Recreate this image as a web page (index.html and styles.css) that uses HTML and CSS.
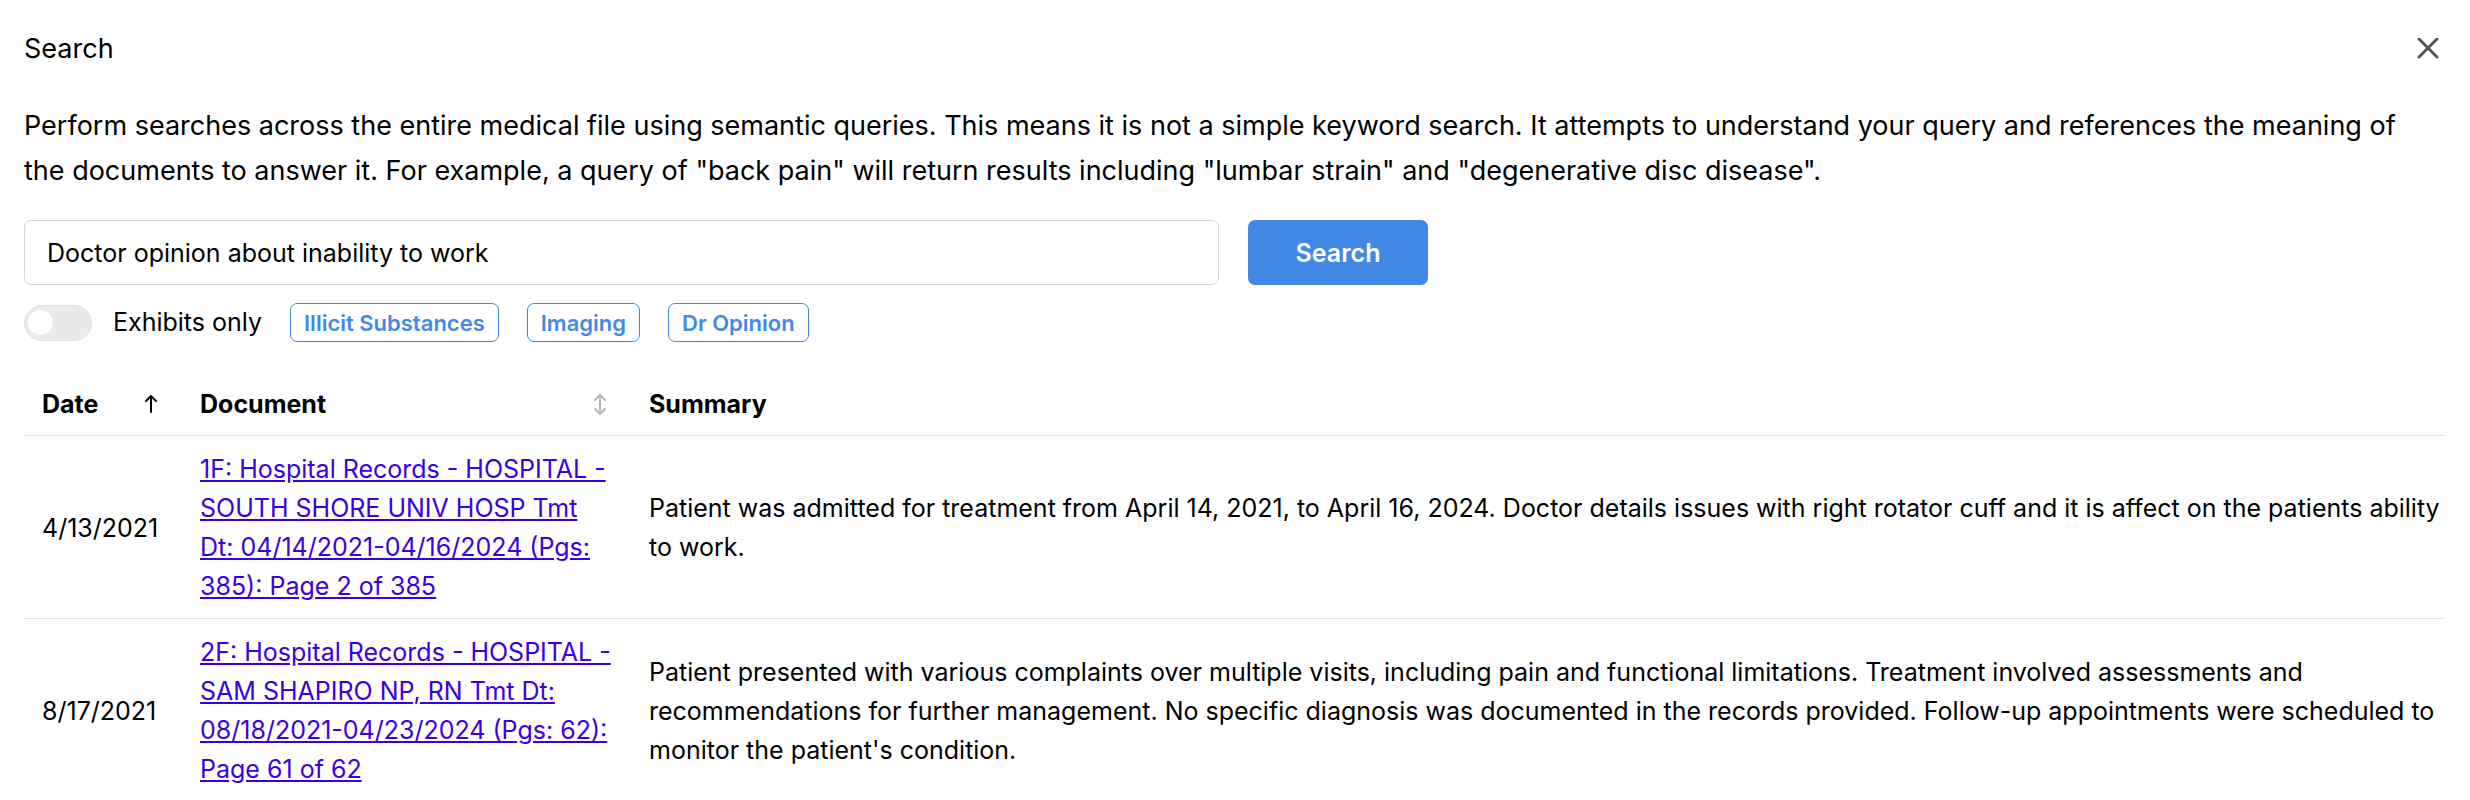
FILE: index.html
```html
<!DOCTYPE html>
<html lang="en">
<head>
    <meta charset="UTF-8">
    <meta name="viewport" content="width=device-width, initial-scale=1.0">
    <title>Search</title>
    <link rel="stylesheet" href="styles.css">
</head>
<body>
    <div class="container">
        <header class="header">
            <h1 class="title">Search</h1>
            <button type="button" class="close-btn" aria-label="Close">
                <svg width="22" height="22" viewBox="0 0 22 22" fill="none" stroke="currentColor" stroke-width="3" stroke-linecap="round">
                    <path d="M2 1 L20 19 M20 1 L2 19"/>
                </svg>
            </button>
        </header>

        <p class="intro">Perform searches across the entire medical file using semantic queries. This means it is not a simple keyword search. It attempts to understand your query and references the meaning of the documents to answer it. For example, a query of "back pain" will return results including "lumbar strain" and "degenerative disc disease".</p>

        <form class="search-form">
            <input type="text" class="search-input" id="query" aria-label="Search query" value="Doctor opinion about inability to work">
            <button type="button" class="search-btn">Search</button>
        </form>

        <div class="filters">
            <div class="switch-group">
                <input type="checkbox" class="switch" id="exhibitsOnly">
                <label for="exhibitsOnly">Exhibits only</label>
            </div>
            <button type="button" class="tag">Illicit Substances</button>
            <button type="button" class="tag">Imaging</button>
            <button type="button" class="tag">Dr Opinion</button>
        </div>

        <table class="results">
            <thead>
                <tr>
                    <th class="col-date">
                        <div class="th-inner">
                            Date
                            <svg class="sort active" width="12" height="22" viewBox="0 0 12 22" fill="none" stroke="currentColor" stroke-width="2" stroke-linecap="round" stroke-linejoin="round">
                                <path d="M6 18 V2 M1 7 L6 2 L11 7"/>
                            </svg>
                        </div>
                    </th>
                    <th class="col-document">
                        <div class="th-inner">
                            Document
                            <svg class="sort" width="12" height="22" viewBox="0 0 12 22" fill="none" stroke="currentColor" stroke-width="2" stroke-linecap="round" stroke-linejoin="round">
                                <path d="M6 1 V20 M1 6 L6 1 L11 6 M1 15 L6 20 L11 15"/>
                            </svg>
                        </div>
                    </th>
                    <th>Summary</th>
                </tr>
            </thead>
            <tbody>
                <tr>
                    <td>4/13/2021</td>
                    <td><a href="#">1F: Hospital Records - HOSPITAL - SOUTH SHORE UNIV HOSP Tmt Dt: 04/14/2021-04/16/2024 (Pgs: 385): Page 2 of 385</a></td>
                    <td>Patient was admitted for treatment from April 14, 2021, to April 16, 2024. Doctor details issues with right rotator cuff and it is affect on the patients ability to work.</td>
                </tr>
                <tr>
                    <td>8/17/2021</td>
                    <td><a href="#">2F: Hospital Records - HOSPITAL - SAM SHAPIRO NP, RN Tmt Dt: 08/18/2021-04/23/2024 (Pgs: 62): Page 61 of 62</a></td>
                    <td>Patient presented with various complaints over multiple visits, including pain and functional limitations. Treatment involved assessments and recommendations for further management. No specific diagnosis was documented in the records provided. Follow-up appointments were scheduled to monitor the patient's condition.</td>
                </tr>
            </tbody>
        </table>
    </div>
</body>
</html>
```
FILE: styles.css
```css
* {
    box-sizing: border-box;
}
body {
    margin: 0;
    background-color: #fff;
    color: #000;
    font-family: Inter, "Liberation Sans", sans-serif;
    font-size: 25px;
    line-height: 39px;
}
button,
input {
    font-family: inherit;
    font-size: 25px;
    margin: 0;
}
.container {
    padding: 26px 26px 0 24px;
}
.header {
    display: flex;
    justify-content: space-between;
    align-items: center;
    padding-right: 5px;
}
.title {
    margin: 0;
    font-size: 27px;
    font-weight: 400;
    line-height: 45px;
}
.close-btn {
    display: flex;
    padding: 0;
    border: none;
    background: none;
    color: #555;
    cursor: pointer;
}
.intro {
    margin: 32px 0 27px;
    padding-right: 6px;
    font-size: 27px;
    line-height: 45px;
}
.search-form {
    display: flex;
    gap: 29px;
}
.search-input {
    width: 1195px;
    height: 65px;
    padding: 0 22px;
    border: 1px solid #ced4da;
    border-radius: 7px;
    color: #000;
}
.search-btn {
    width: 180px;
    height: 65px;
    border: none;
    border-radius: 7px;
    background-color: #4289e6;
    color: #fff;
    font-weight: 600;
    cursor: pointer;
}
.filters {
    display: flex;
    align-items: center;
    gap: 28px;
    margin-top: 18px;
}
.switch-group {
    display: flex;
    align-items: center;
    gap: 21px;
}
.switch {
    appearance: none;
    display: flex;
    align-items: center;
    width: 68px;
    height: 36px;
    padding: 0 3px;
    border: 1px solid #dee2e6;
    border-radius: 18px;
    background-color: #e9eaec;
}
.switch::before {
    content: "";
    width: 25px;
    height: 25px;
    border-radius: 50%;
    background-color: #fff;
}
.switch:checked {
    justify-content: flex-end;
    background-color: #4289e6;
}
.tag {
    height: 39px;
    padding: 0 13px;
    border: 1px solid #4289e6;
    border-radius: 7px;
    background-color: #fff;
    color: #4289e6;
    font-size: 22px;
    font-weight: 600;
    cursor: pointer;
}
.results {
    width: 100%;
    margin-top: 29px;
    border-collapse: collapse;
}
.results th,
.results td {
    padding: 14px 18px 12px;
    text-align: left;
    vertical-align: middle;
}
.results th {
    padding-bottom: 11px;
    font-weight: 700;
}
.results td:last-child {
    padding-right: 0;
}
.results tr {
    border-bottom: 1px solid #dee2e6;
}
.results tbody tr:last-child {
    border-bottom: none;
}
.col-date {
    width: 158px;
}
.col-document {
    width: 449px;
}
.th-inner {
    display: flex;
    justify-content: space-between;
    align-items: center;
}
.sort {
    margin-right: 7px;
    color: #b5b5b5;
}
.sort.active {
    color: #000;
}
.results a {
    color: #3a00e5;
}
```
